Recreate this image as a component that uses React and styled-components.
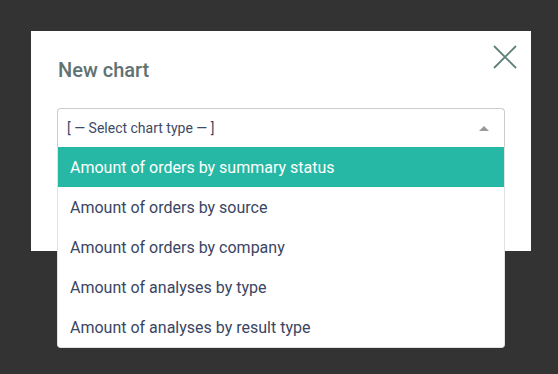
import React from "react";
import styled, { createGlobalStyle } from "styled-components";

const Global = createGlobalStyle`
  html, body { margin: 0; padding: 0; background: #333333; }
  body { font-family: Roboto, "Liberation Sans", sans-serif; height: 374px; overflow: hidden; }
`;

const Page = styled.div`
  padding: 31px 0 0 31px;
`;

const Modal = styled.div`
  position: relative;
  box-sizing: border-box;
  width: 500px;
  height: 220px;
  background: #ffffff;
  padding: 27px 26px 0 26px;
`;

const Title = styled.h2`
  margin: 0 0 26px 1px;
  font-size: 20px;
  line-height: 24px;
  font-weight: 500;
  color: #5f7271;
`;

const Close = styled.button`
  position: absolute;
  top: 14px;
  right: 14px;
  width: 24px;
  height: 24px;
  padding: 0;
  border: 0;
  background: transparent;
  display: flex;
  align-items: center;
  justify-content: center;
`;

const SelectWrap = styled.div`
  position: relative;
  width: 448px;
`;

const SelectBox = styled.div`
  box-sizing: border-box;
  height: 39px;
  border: 1px solid #cccccc;
  border-bottom: 0;
  border-radius: 4px 4px 0 0;
  display: flex;
  align-items: center;
  justify-content: space-between;
  padding: 0 15px 0 9px;
  font-size: 14px;
  color: #3e4a66;
`;

const Arrow = styled.span`
  width: 0;
  height: 0;
  border-left: 5px solid transparent;
  border-right: 5px solid transparent;
  border-bottom: 5px solid #999999;
`;

const List = styled.ul`
  position: absolute;
  top: 39px;
  left: 0;
  right: 0;
  margin: 0;
  padding: 0;
  list-style: none;
  background: #ffffff;
  border: 1px solid #e2e2e2;
  border-top: 0;
  border-radius: 0 0 4px 4px;
  overflow: hidden;
  z-index: 2;
`;

const Option = styled.li`
  height: 40px;
  display: flex;
  align-items: center;
  padding-left: 12px;
  font-size: 16px;
  color: ${(p) => (p.$active ? "#ffffff" : "#3a4563")};
  background: ${(p) => (p.$active ? "#26b8a4" : "#ffffff")};
`;

const options = [
  "Amount of orders by summary status",
  "Amount of orders by source",
  "Amount of orders by company",
  "Amount of analyses by type",
  "Amount of analyses by result type",
];

export default function App() {
  return (
    <Page>
      <Global />
      <Modal>
        <Title>New chart</Title>
        <Close aria-label="Close">
          <svg width="24" height="24" viewBox="0 0 24 24">
            <path d="M1 1 L23 23 M23 1 L1 23" stroke="#5f8078" strokeWidth="1.8" fill="none" />
          </svg>
        </Close>
        <SelectWrap>
          <SelectBox>
            <span>[ — Select chart type — ]</span>
            <Arrow />
          </SelectBox>
          <List>
            {options.map((o, i) => (
              <Option key={o} $active={i === 0}>{o}</Option>
            ))}
          </List>
        </SelectWrap>
      </Modal>
    </Page>
  );
}
